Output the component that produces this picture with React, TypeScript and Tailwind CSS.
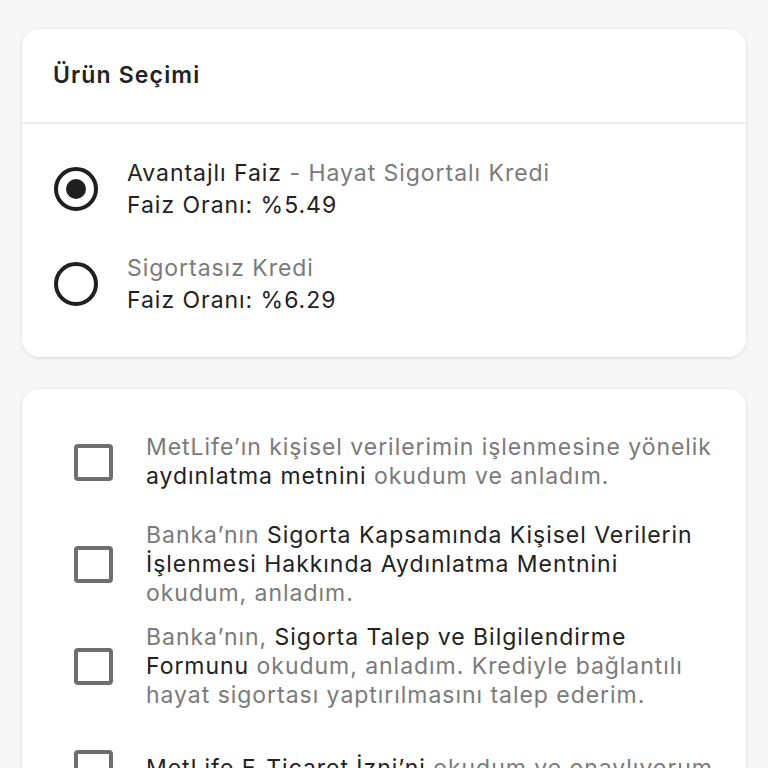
const Radio = ({ checked }: { checked: boolean }) => (
  <div className="w-[44px] h-[44px] shrink-0 rounded-full border-[4px] border-[#1f1f1f] flex items-center justify-center">
    {checked && <div className="w-[20px] h-[20px] rounded-full bg-[#1f1f1f]" />}
  </div>
);

const Checkbox = () => (
  <div className="w-[39px] h-[37px] shrink-0 rounded-[4px] border-[4px] border-[#6e6e6e]" />
);

const consents: { parts: [string, boolean][] }[] = [
  { parts: [["MetLife’ın kişisel verilerimin işlenmesine yönelik ", false], ["aydınlatma metnini", true], [" okudum ve anladım.", false]] },
  { parts: [["Banka’nın ", false], ["Sigorta Kapsamında Kişisel Verilerin İşlenmesi Hakkında Aydınlatma Mentnini", true], [" okudum, anladım.", false]] },
  { parts: [["Banka’nın, ", false], ["Sigorta Talep ve Bilgilendirme Formunu", true], [" okudum, anladım. Krediyle bağlantılı hayat sigortası yaptırılmasını talep ederim.", false]] },
  { parts: [["MetLife E-Ticaret İzni’ni", true], [" okudum ve onaylıyorum.", false]] },
];

export default function App() {
  return (
    <div className="h-screen overflow-hidden bg-[#f7f7f7] px-[22px] pt-[29px] font-['Inter','Noto_Sans',sans-serif] text-[#222] tracking-[0.06em]">
      <div className="bg-white rounded-[18px] shadow-[0_1px_4px_rgba(0,0,0,0.12)]">
        <div className="h-[95px] flex items-center px-[31px] border-b-2 border-[#ececec]">
          <h2 className="text-[23px] font-semibold tracking-[0.05em]">Ürün Seçimi</h2>
        </div>
        <div className="px-[32px] pt-[33px] pb-[41px] flex flex-col gap-[31px]">
          <div className="flex items-center gap-[29px]">
            <Radio checked />
            <div className="text-[23px] leading-[32px]">
              <div>Avantajlı Faiz <span className="text-[#7a7a7a]">- Hayat Sigortalı Kredi</span></div>
              <div>Faiz Oranı: %5.49</div>
            </div>
          </div>
          <div className="flex items-center gap-[29px]">
            <Radio checked={false} />
            <div className="text-[23px] leading-[32px]">
              <div className="text-[#7a7a7a]">Sigortasız Kredi</div>
              <div>Faiz Oranı: %6.29</div>
            </div>
          </div>
        </div>
      </div>

      <div className="mt-[32px] bg-white rounded-[18px] shadow-[0_1px_4px_rgba(0,0,0,0.12)] pl-[52px] pr-[24px] pt-[22px] pb-[20px] flex flex-col">
        {consents.map((c, i) => (
          <div key={i} className="h-[102px] flex items-center gap-[33px]">
            <Checkbox />
            <p className="text-[23px] leading-[29px] text-[#7a7a7a]">
              {c.parts.map(([t, strong], j) => (
                <span key={j} className={strong ? "text-[#222]" : ""}>{t}</span>
              ))}
            </p>
          </div>
        ))}
      </div>
    </div>
  );
}
